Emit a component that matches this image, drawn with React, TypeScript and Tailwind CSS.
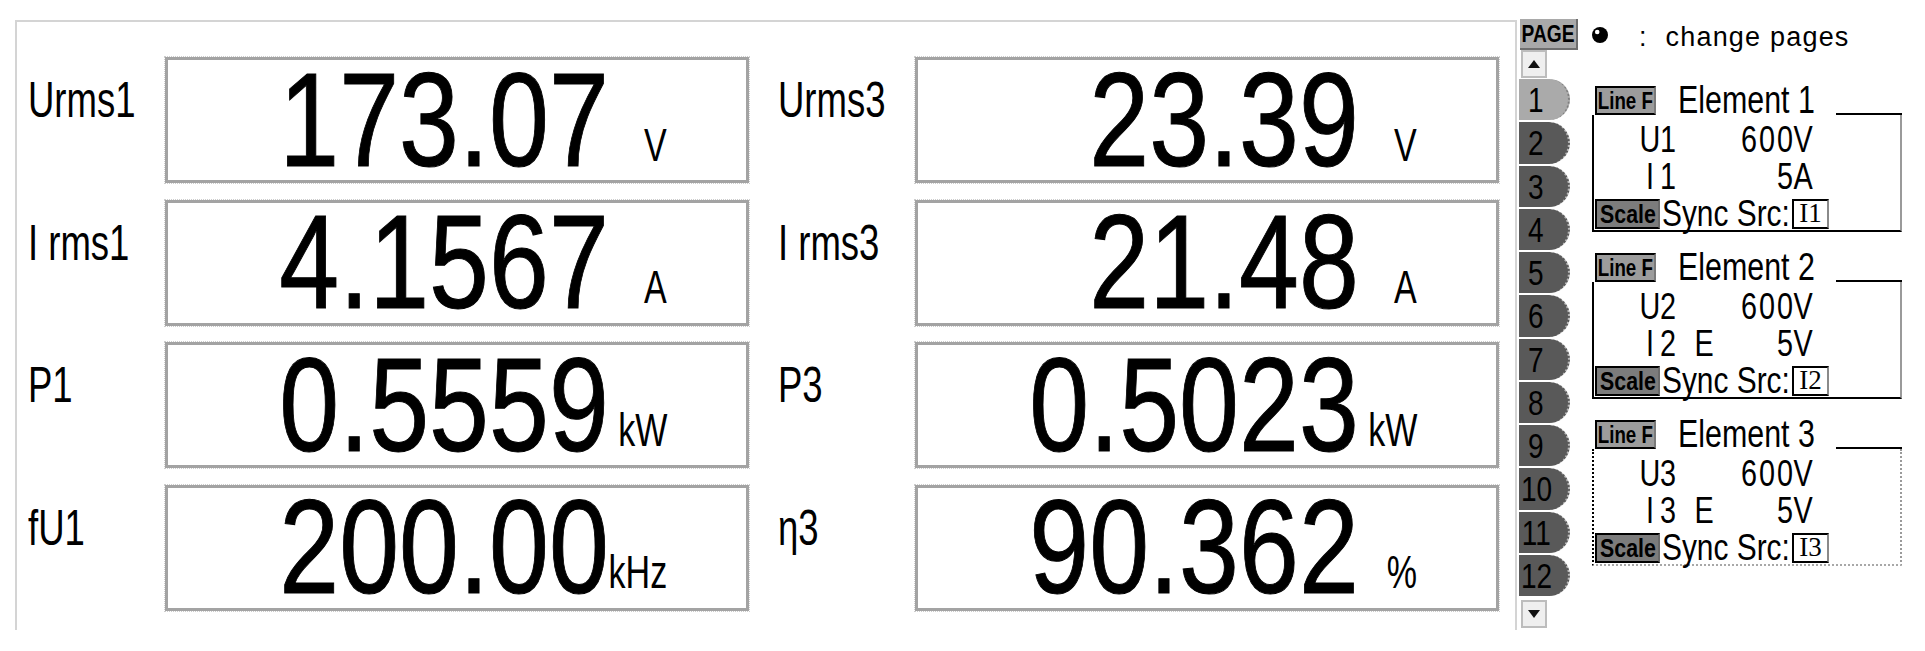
type Reading = { label: string; value: string; unit: string };

const rows: Reading[][] = [
  [
    { label: "Urms1", value: "173.07", unit: "V" },
    { label: "Urms3", value: "23.39", unit: "V" },
  ],
  [
    { label: "I rms1", value: "4.1567", unit: "A" },
    { label: "I rms3", value: "21.48", unit: "A" },
  ],
  [
    { label: "P1", value: "0.5559", unit: "kW" },
    { label: "P3", value: "0.5023", unit: "kW" },
  ],
  [
    { label: "fU1", value: "200.00", unit: "kHz" },
    { label: "η3", value: "90.362", unit: "%" },
  ],
];

const elements = [
  { n: 1, range: [["U1", "600V"], ["I1", "5A"]], last: false },
  { n: 2, range: [["U2", "600V"], ["I2 E", "5V"]], last: false },
  { n: 3, range: [["U3", "600V"], ["I3 E", "5V"]], last: true },
];

const pages = Array.from({ length: 12 }, (_, i) => i + 1);

// The instrument font is a condensed sans; no narrow face is installed, so
// Liberation Sans is squeezed horizontally with scale-x.
function Readout({ label, value, unit }: Reading) {
  return (
    <div className="flex">
      <div className="w-[137px] pt-[18px]">
        <span className="inline-block origin-left scale-x-[0.73] whitespace-pre text-[50px] leading-none">
          {label}
        </span>
      </div>
      <div className="flex h-[126px] w-[584px] items-center justify-end border-[3px] border-[#a3a3a3] pr-[79px] outline-1 outline-dotted outline-[#cdcdcd]">
        <div className="flex items-baseline">
          <span className="inline-block origin-right scale-x-[0.81] text-[133px] leading-none [-webkit-text-stroke:1px_#000]">
            {value}
          </span>
          <span className="flex w-[58px] -translate-y-[5px] justify-end text-[46px] leading-none">
            <span className="inline-block origin-right scale-x-[0.74]">{unit}</span>
          </span>
        </div>
      </div>
    </div>
  );
}

// fixed-width character cells, the way the instrument's range font lays out
function Cells({ text }: { text: string }) {
  return (
    <span className="flex">
      {Array.from(text).map((ch, i) => (
        <span key={i} className="flex w-[18px] justify-center">
          <span className="inline-block scale-x-[0.8]">{ch === " " ? "\u00a0" : ch}</span>
        </span>
      ))}
    </span>
  );
}

function Arrow({ down = false }: { down?: boolean }) {
  return (
    <div className="ml-[2px] flex h-[28px] w-[26px] items-center justify-center border-2 border-[#bdbdbd] bg-[#efefef]">
      <svg width="12" height="8" viewBox="0 0 12 8">
        <polygon points={down ? "0,0 12,0 6,8" : "6,0 12,8 0,8"} fill="#111" />
      </svg>
    </div>
  );
}

function ElementBlock({ n, range, last }: (typeof elements)[number]) {
  return (
    <div className="w-[310px]">
      <div className="flex h-[29px]">
        <div className="ml-[3px] flex w-[61px] items-center justify-center whitespace-nowrap border-2 border-black border-r-[#7a7a7a] bg-[#9c9c9c] text-[24px] font-bold leading-none">
          <span className="inline-block scale-x-[0.78]">Line F</span>
        </div>
        <span className="ml-[22px] w-[140px] whitespace-nowrap text-[38px] leading-[29px]">
          <span className="inline-block origin-left scale-x-[0.8]">Element {n}</span>
        </span>
        <div className="ml-[18px] flex-1 self-end border-t-2 border-black" />
      </div>
      <div
        className={`h-[117px] border-b-2 border-l-2 border-r-2 border-l-black border-r-[#9a9a9a] pt-[6px] text-[36px] leading-[37px] ${
          last ? "border-dotted border-b-[#a8a8a8]" : "border-b-black"
        }`}
      >
        {range.map(([q, v]) => (
          <div key={q} className="flex justify-between pl-[47px] pr-[88px]">
            <Cells text={q} />
            <Cells text={v} />
          </div>
        ))}
        <div className="flex h-[37px] items-center">
          <div className="ml-[1px] flex h-[30px] w-[65px] items-center justify-center whitespace-nowrap border-2 border-black border-r-[#6a6a6a] bg-[#7c7c7c] text-[26px] font-bold leading-none">
            <span className="inline-block scale-x-[0.82]">Scale</span>
          </div>
          <span className="ml-[2px] w-[130px] whitespace-nowrap text-[36px] leading-none">
            <span className="inline-block origin-left scale-x-[0.83]">Sync Src:</span>
          </span>
          <div className="flex h-[30px] w-[37px] items-center justify-center border-2 border-black border-r-[#8a8a8a] bg-white font-['Liberation_Serif',serif] text-[27px] leading-none">
            I{n}
          </div>
        </div>
      </div>
    </div>
  );
}

export default function App() {
  return (
    <div className="flex h-[651px] w-[1925px] bg-white pl-[15px] pt-[19px] font-['Liberation_Sans',sans-serif] text-black">
      {/* measurement frame */}
      <div className="mt-[1px] h-[610px] w-[1502px] border-l-2 border-r-2 border-t-2 border-[#d4d4d4] pl-[11px] pt-[35px]">
        <div className="flex flex-col gap-[16.6px]">
          {rows.map((pair, i) => (
            <div key={i} className="flex gap-[29px]">
              <Readout {...pair[0]} />
              <Readout {...pair[1]} />
            </div>
          ))}
        </div>
      </div>

      {/* page tabs */}
      <div className="ml-[2px] flex w-[59px] flex-col">
        <div className="ml-[1px] flex h-[31px] w-[58px] items-center justify-center whitespace-nowrap border-b-2 border-r-2 border-[#6e6e6e] bg-[#a9a9a9] text-[24px] font-bold leading-none">
          <span className="inline-block scale-x-[0.8]">PAGE</span>
        </div>
        <Arrow />
        <div className="mt-[1px] flex flex-col gap-[2px]">
          {pages.map((p) => (
            <div
              key={p}
              className={`flex h-[41.25px] w-[51px] items-center rounded-r-[21px] border-r-2 border-dotted ${
                p === 1 ? "border-[#7e7e7e] bg-[#aaaaaa]" : "border-[#b8b8b8] bg-[#595959]"
              }`}
            >
              <span className="flex w-[34px] justify-center text-[35px] leading-none">
                <span className="inline-block scale-x-[0.8]">{p}</span>
              </span>
            </div>
          ))}
        </div>
        <div className="mt-[4px]">
          <Arrow down />
        </div>
      </div>

      {/* range settings */}
      <div className="ml-[14px] flex flex-col">
        <div className="mt-[3px] flex h-[30px] items-center">
          <svg width="16" height="16" viewBox="0 0 16 16" className="-mt-[4px]">
            <circle cx="8" cy="8" r="8" fill="#000" />
            <circle cx="5.2" cy="5" r="2.3" fill="#fff" />
          </svg>
          <span className="ml-[31px] text-[27px] leading-[30px]">:</span>
          <span className="ml-[19px] text-[27px] leading-[30px] tracking-[1.2px]">change pages</span>
        </div>
        <div className="mt-[34px] flex flex-col gap-[21px]">
          {elements.map((e) => (
            <ElementBlock key={e.n} {...e} />
          ))}
        </div>
      </div>
    </div>
  );
}
